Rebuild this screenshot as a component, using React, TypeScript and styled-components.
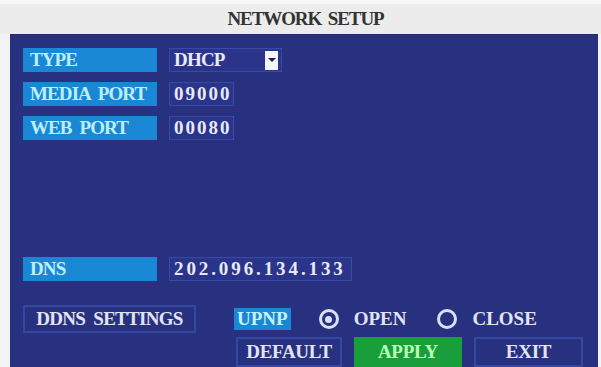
import React from "react";
import styled, { createGlobalStyle } from "styled-components";

const GlobalStyle = createGlobalStyle`
  html, body {
    margin: 0;
    padding: 0;
    background: #f6f6f6;
  }
  body {
    font-family: "Liberation Serif", "Times New Roman", serif;
    font-weight: bold;
  }
`;

const Window = styled.div`
  width: 601px;
  height: 367px;
  display: flex;
  flex-direction: column;
  overflow: hidden;
  background: #f7f7f7;
`;

const TitleBar = styled.div`
  height: 31px;
  margin-top: 4px;
  padding-left: 10px;
  display: flex;
  align-items: center;
  justify-content: center;
  background: #ececec;
  color: #333333;
  font-size: 19px;
  letter-spacing: -1.1px;
  word-spacing: 3px;
`;

const Body = styled.div`
  flex: 1;
  display: flex;
  padding: 0 3px 0 10px;
  background: #f3f3f3;
`;

const Panel = styled.div`
  flex: 1;
  display: flex;
  flex-direction: column;
  padding: 13px 0 0 13px;
  background: #28317f;
  border-top: 1px solid #1f2770;
`;

const Row = styled.div<{ $top?: number }>`
  display: flex;
  align-items: center;
  gap: 12px;
  height: 24px;
  margin-top: ${(p) => p.$top ?? 10}px;
`;

const Label = styled.div`
  width: 134px;
  height: 100%;
  padding-left: 7px;
  box-sizing: border-box;
  display: flex;
  align-items: center;
  background: #1a87d4;
  color: #bdeeff;
  font-size: 19px;
  letter-spacing: -0.9px;
  word-spacing: 4px;
  white-space: pre;
`;

const Value = styled.div<{ $w: number; $ls: number }>`
  width: ${(p) => p.$w}px;
  height: 100%;
  box-sizing: border-box;
  padding-left: 4px;
  display: flex;
  align-items: center;
  border: 1px solid #3a4aa3;
  background: #2a348a;
  color: #e8eaf8;
  font-size: 19px;
  letter-spacing: ${(p) => p.$ls}px;
`;

const DropArrow = styled.div`
  margin-left: auto;
  margin-right: 3px;
  width: 13px;
  height: 19px;
  background: #f4f4fa;
  display: flex;
  align-items: center;
  justify-content: center;
  &::after {
    content: "";
    border-left: 4px solid transparent;
    border-right: 4px solid transparent;
    border-top: 4px solid #1b1f40;
  }
`;

const Bottom = styled.div`
  display: grid;
  grid-template-columns: 173px auto;
  column-gap: 38px;
  row-gap: 4px;
  margin-top: 24px;
  justify-content: start;
`;

const OutlineButton = styled.div<{ $w: number; $green?: boolean }>`
  width: ${(p) => p.$w}px;
  height: 30px;
  box-sizing: border-box;
  display: flex;
  align-items: center;
  justify-content: center;
  border: 2px solid ${(p) => (p.$green ? "#1a9e3c" : "#3547a0")};
  background: ${(p) => (p.$green ? "#1a9e3c" : "transparent")};
  color: ${(p) => (p.$green ? "#b8ffb8" : "#e2e4f6")};
  font-size: 19px;
  letter-spacing: -0.3px;
`;

const DdnsButton = styled(OutlineButton)`
  height: 28px;
  letter-spacing: -0.7px;
  word-spacing: 4px;
  white-space: pre;
`;

const UpnpLine = styled.div`
  display: flex;
  align-items: center;
  height: 28px;
`;

const UpnpTag = styled.div`
  height: 22px;
  padding: 0 3px;
  display: flex;
  align-items: center;
  background: #1a87d4;
  color: #c6f2ff;
  font-size: 19px;
  margin-right: 28px;
`;

const Radio = styled.div<{ $on?: boolean }>`
  width: 20px;
  height: 20px;
  box-sizing: border-box;
  border-radius: 50%;
  border: 3px solid #dcdff5;
  display: flex;
  align-items: center;
  justify-content: center;
  margin-right: 15px;
  &::after {
    content: "";
    display: ${(p) => (p.$on ? "block" : "none")};
    width: 7px;
    height: 7px;
    border-radius: 50%;
    background: #dcdff5;
  }
`;

const RadioText = styled.span<{ $gap?: number }>`
  color: #e2e4f6;
  font-size: 19px;
  margin-right: ${(p) => p.$gap ?? 0}px;
`;

const ButtonRow = styled.div`
  grid-column: 2;
  display: flex;
  gap: 12px;
  padding-left: 2px;
`;

export default function App() {
  return (
    <>
      <GlobalStyle />
      <Window>
        <TitleBar>NETWORK SETUP</TitleBar>
        <Body>
          <Panel>
            <Row $top={0}>
              <Label>TYPE</Label>
              <Value $w={113} $ls={-0.8}>
                DHCP
                <DropArrow />
              </Value>
            </Row>
            <Row>
              <Label>MEDIA PORT</Label>
              <Value $w={65} $ls={2}>
                09000
              </Value>
            </Row>
            <Row>
              <Label>WEB PORT</Label>
              <Value $w={65} $ls={2}>
                00080
              </Value>
            </Row>
            <Row $top={117}>
              <Label>DNS</Label>
              <Value $w={183} $ls={2.9}>
                202.096.134.133
              </Value>
            </Row>
            <Bottom>
              <DdnsButton $w={173}>DDNS SETTINGS</DdnsButton>
              <UpnpLine>
                <UpnpTag>UPNP</UpnpTag>
                <Radio $on />
                <RadioText $gap={31}>OPEN</RadioText>
                <Radio />
                <RadioText>CLOSE</RadioText>
              </UpnpLine>
              <ButtonRow>
                <OutlineButton $w={106}>DEFAULT</OutlineButton>
                <OutlineButton $w={108} $green>
                  APPLY
                </OutlineButton>
                <OutlineButton $w={109}>EXIT</OutlineButton>
              </ButtonRow>
            </Bottom>
          </Panel>
        </Body>
      </Window>
    </>
  );
}
